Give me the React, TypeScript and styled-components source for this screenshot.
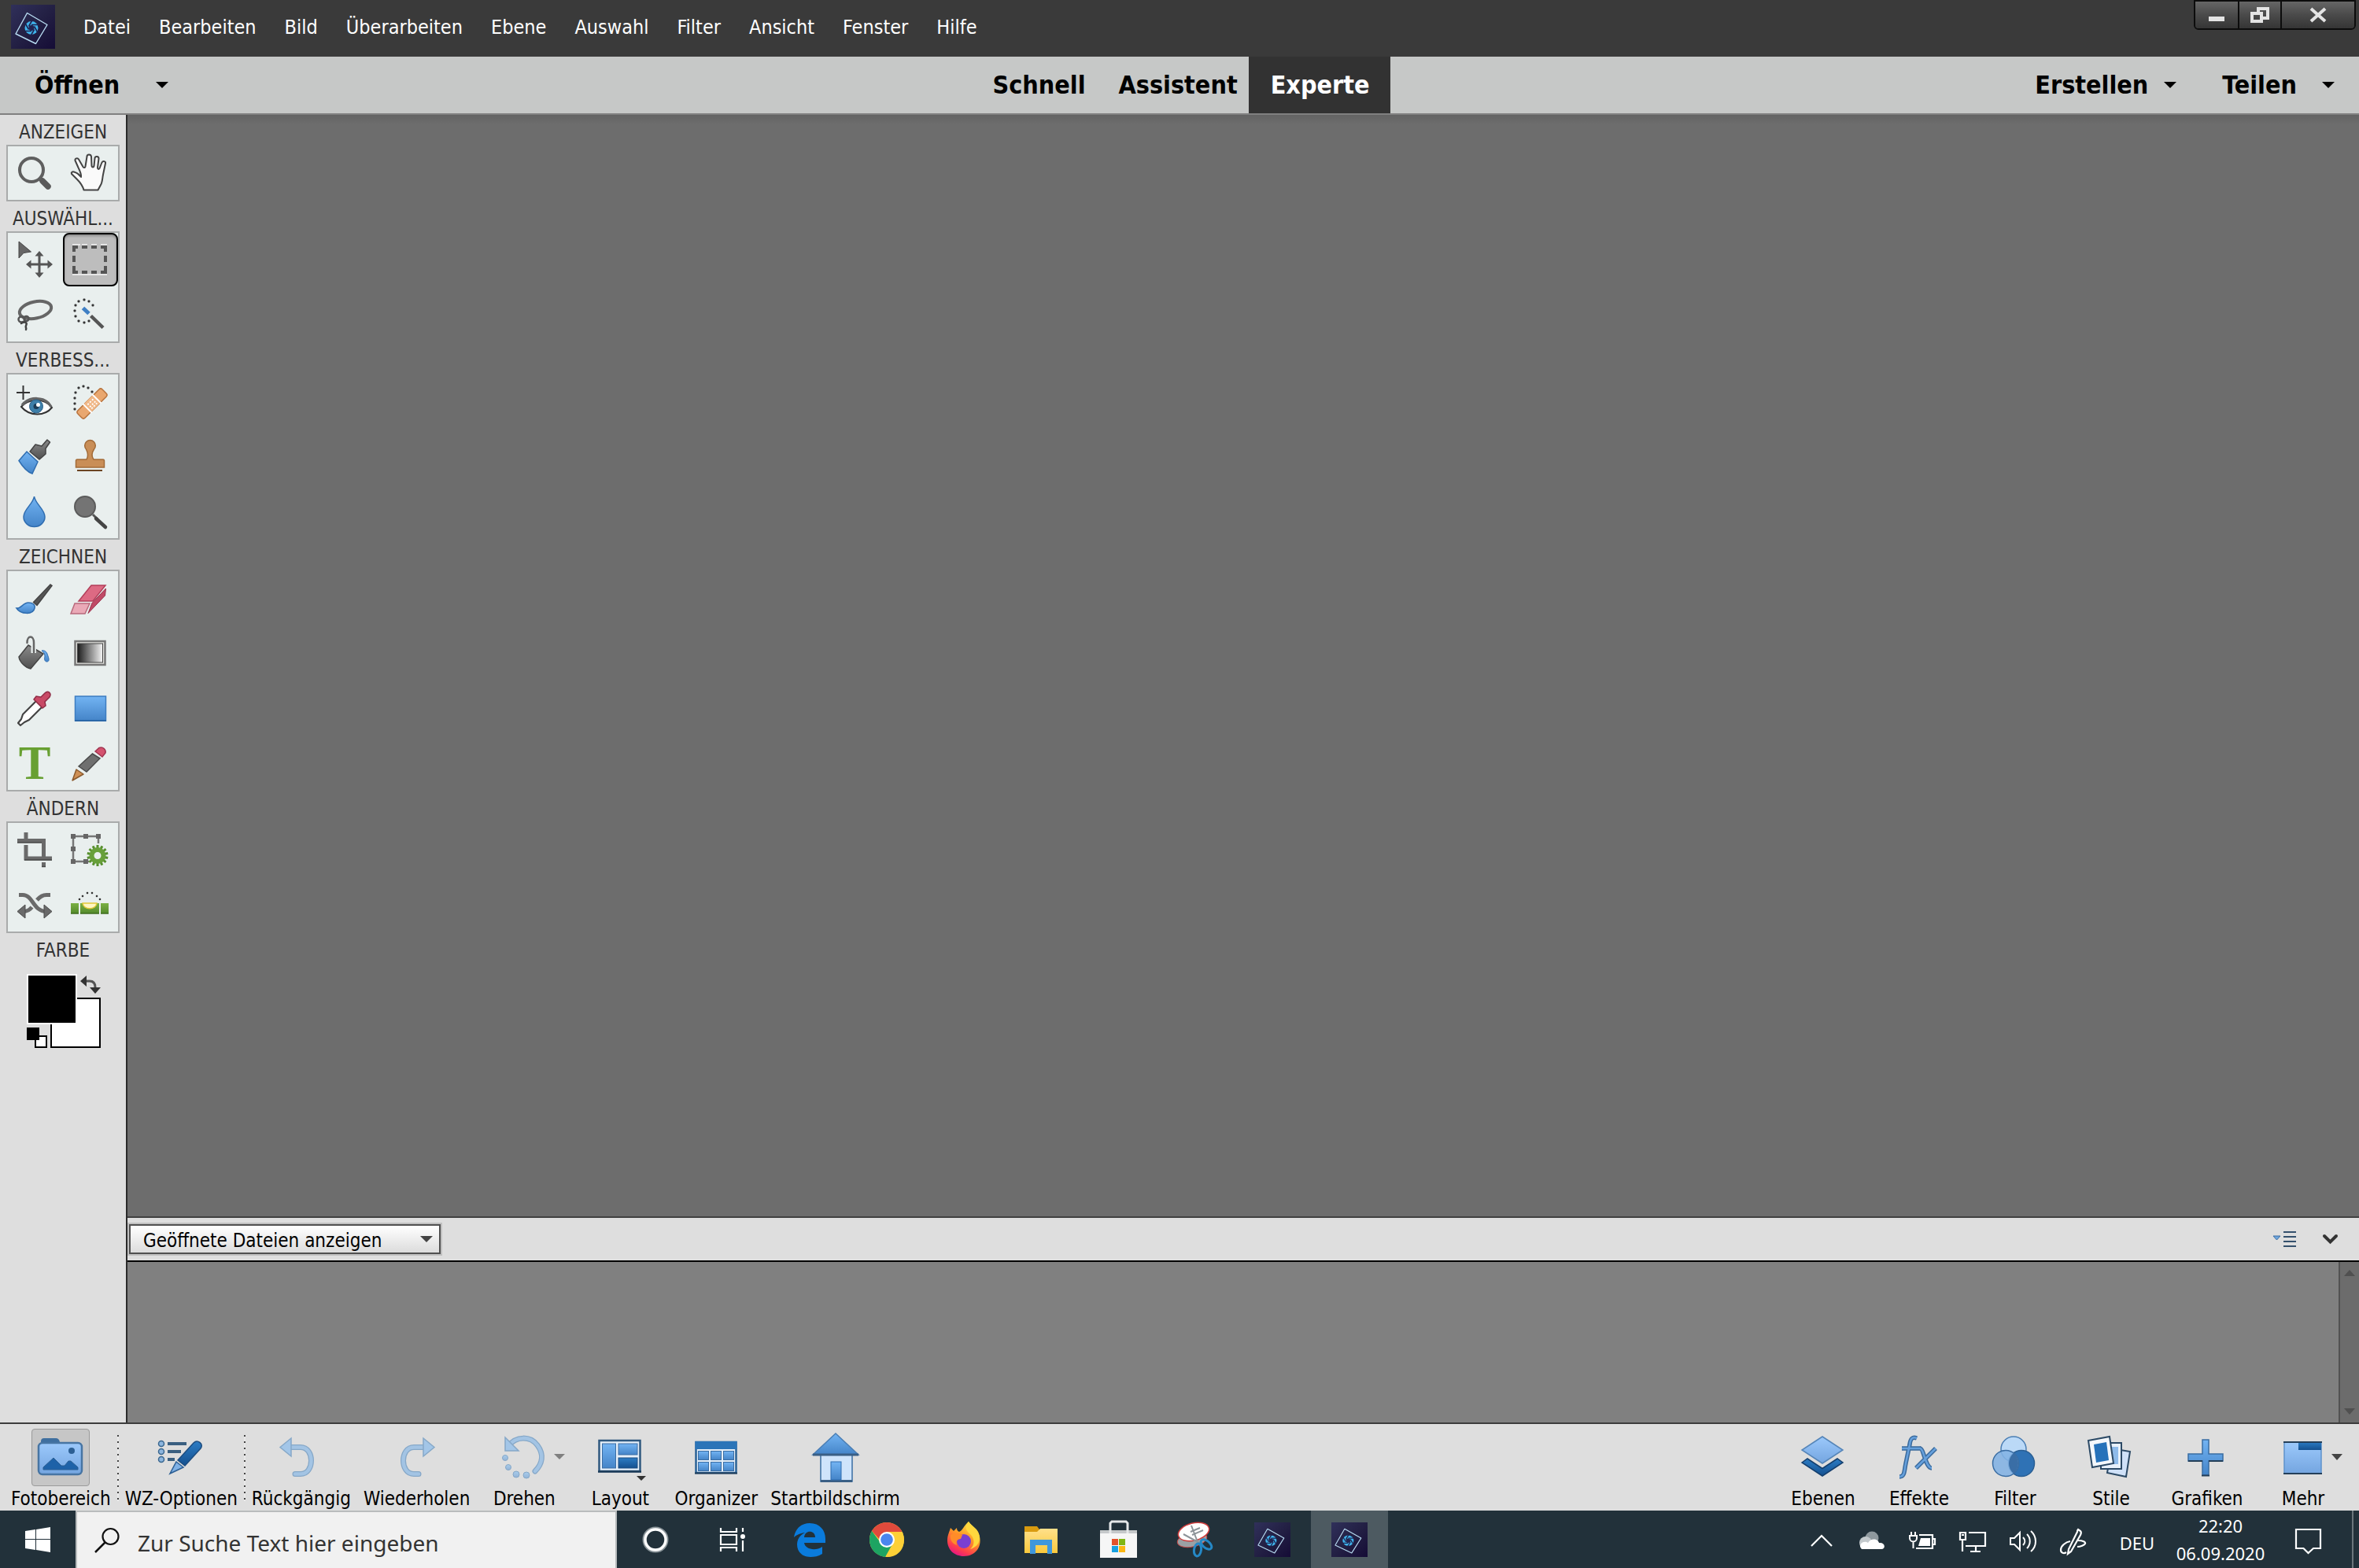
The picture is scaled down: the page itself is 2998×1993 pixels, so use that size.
import React from "react";
import styled, { createGlobalStyle, css } from "styled-components";

const UI_FONT = `"DejaVu Sans Condensed", "DejaVu Sans", "Noto Sans", sans-serif`;
const SYSTEM_FONT = `"Noto Sans", "Open Sans", sans-serif`;

const GlobalStyle = createGlobalStyle`
  *, *::before, *::after { box-sizing: border-box; }
  html, body { margin: 0; padding: 0; }
  body { background: #dedede; font-family: ${UI_FONT}; color: #000; }
  button, select, input { font: inherit; color: inherit; margin: 0; padding: 0; border: 0; background: none; border-radius: 0; }
  svg { display: block; overflow: visible; flex: none; }
`;

/* ---------- shell ---------- */

const Shell = styled.div`
  display: flex;
  flex-direction: column;
  height: 100vh;
  overflow: hidden;
`;

const TitleBar = styled.header`
  display: flex;
  align-items: flex-start;
  justify-content: space-between;
  height: 72px;
  padding: 0 4px 0 14px;
  background: #3a3a3a;
`;

const MenuGroup = styled.nav`
  display: flex;
  align-items: center;
  gap: 36px;
  height: 70px;
`;

const LogoSlot = styled.span`
  display: flex;
  padding-bottom: 2px;
`;

const MenuItem = styled.button`
  font-size: 25px;
  line-height: 32px;
  color: #fff;
`;

const WindowControls = styled.div`
  display: flex;
  border: 2px solid #0c0c0c;
  border-radius: 0 0 6px 6px;
  overflow: hidden;
`;

const WindowButton = styled.button<{ $wide?: boolean }>`
  display: flex;
  align-items: center;
  justify-content: center;
  width: ${(p) => (p.$wide ? 94 : 54)}px;
  height: 34px;
  background: linear-gradient(#666, #4a4a4a 50%, #353535);
  & + & {
    border-left: 2px solid #0c0c0c;
  }
`;

/* ---------- mode bar ---------- */

const ModeBar = styled.div`
  display: grid;
  grid-template-columns: 1fr auto 1fr;
  height: 74px;
  background: #c6c8c7;
  border-bottom: 2px solid #808080;
  font-size: 32px;
  line-height: 40px;
  font-weight: 700;
`;

const ModeSide = styled.div<{ $end?: boolean }>`
  display: flex;
  align-items: center;
  justify-content: ${(p) => (p.$end ? "flex-end" : "flex-start")};
  gap: 58px;
  padding: 0 31px 0 44px;
`;

const DropButton = styled.button<{ $gap: number }>`
  display: flex;
  align-items: center;
  gap: ${(p) => p.$gap}px;
  font-weight: 700;
`;

const Tabs = styled.div`
  display: flex;
`;

const Tab = styled.button<{ $active?: boolean }>`
  padding: 0 14px 0 30px;
  font-weight: 700;
  & + & {
    padding-left: 28px;
  }
  ${(p) =>
    p.$active &&
    css`
      && {
        padding: 0 26px 0 28px;
      }
      background: #323232;
      color: #fff;
    `}
`;

/* ---------- work area ---------- */

const WorkArea = styled.main`
  display: flex;
  flex: 1;
  min-height: 0;
`;

const Toolbox = styled.aside`
  width: 162px;
  padding: 0 8px;
  background: #dedede;
  border-right: 2px solid #2a2a2a;
`;

const ToolHeading = styled.h2`
  margin: 0;
  height: 38px;
  padding-top: 6px;
  font-size: 24px;
  line-height: 32px;
  font-weight: 400;
  text-align: center;
  color: #333;
`;

const ToolGrid = styled.div`
  display: grid;
  grid-template-columns: 1fr 1fr;
  row-gap: 2px;
  border: 2px solid #a9abab;
  background: #e9efee;
`;

const ToolButton = styled.button<{ $selected?: boolean }>`
  display: flex;
  align-items: center;
  justify-content: center;
  height: 68px;
  ${(p) =>
    p.$selected &&
    css`
      background: #bdbdbd;
      border: 2px solid #000;
      border-radius: 8px;
      box-shadow: inset 0 2px 3px #8c8c8c;
    `}
`;

const Swatches = styled.div`
  display: flex;
  padding: 14px 0 0 26px;
`;

const Documents = styled.section`
  display: flex;
  flex-direction: column;
  flex: 1;
  min-width: 0;
`;

const Canvas = styled.div`
  flex: 1;
  background: linear-gradient(#636363, #6d6d6d 12px);
`;

const BinBar = styled.div`
  display: flex;
  align-items: center;
  justify-content: space-between;
  height: 58px;
  padding: 0 27px 0 2px;
  background: #dedede;
  border-top: 2px solid #404040;
  border-bottom: 2px solid #000;
`;

const SelectWrap = styled.label`
  display: grid;
  grid-template-columns: 1fr 24px;
  align-items: center;
  width: 396px;
  height: 38px;
  border: 2px solid #505050;
  background: linear-gradient(#fff, #dcdcdc);
  box-shadow: 0 0 0 2px #c0c0c0;
`;

const BinSelect = styled.select`
  grid-area: 1 / 1 / 2 / 3;
  height: 34px;
  padding: 4px 0 0 16px;
  appearance: none;
  font-size: 24px;
  line-height: 30px;
`;

const SelectArrow = styled.svg`
  grid-area: 1 / 2 / 2 / 3;
  pointer-events: none;
`;

const BinActions = styled.div`
  display: flex;
  align-items: center;
  gap: 34px;
`;

const IconButton = styled.button`
  display: flex;
`;

const Bin = styled.div`
  display: flex;
  justify-content: flex-end;
  height: 204px;
  background: #808080;
`;

const BinScroll = styled.div`
  display: flex;
  flex-direction: column;
  align-items: center;
  justify-content: space-between;
  width: 26px;
  padding: 10px 0;
  background: #6c6c6c;
  border-left: 2px solid #525252;
`;

/* ---------- action bar ---------- */

const ActionBar = styled.footer`
  display: flex;
  justify-content: space-between;
  height: 112px;
  padding: 0 10px 0 6px;
  background: #dedede;
  border-top: 2px solid #3c3c3c;
`;

const ActionGroup = styled.div`
  display: flex;
`;

const Action = styled.button`
  display: flex;
  flex-direction: column;
  align-items: center;
  gap: 1px;
  min-width: 122px;
  padding: 6px 8px 0;
  font-size: 24px;
  line-height: 30px;
`;

const ActionIcon = styled.span<{ $on?: boolean }>`
  display: flex;
  align-items: center;
  justify-content: center;
  width: 74px;
  height: 74px;
  border: 1px solid ${(p) => (p.$on ? "#9a9a9a" : "transparent")};
  border-radius: 4px;
  background: ${(p) => (p.$on ? "#c6c6c6" : "transparent")};
`;

const DottedRule = styled.span`
  width: 2px;
  margin: 14px 0 12px;
  background: repeating-linear-gradient(#444 0 2px, #e8e8e8 2px 8px);
`;

/* ---------- taskbar ---------- */

const Taskbar = styled.footer`
  display: flex;
  justify-content: space-between;
  height: 73px;
  background: #22313a;
  color: #fff;
  font-family: ${SYSTEM_FONT};
`;

const TaskGroup = styled.div`
  display: flex;
`;

const StartButton = styled.button`
  display: flex;
  align-items: center;
  justify-content: center;
  width: 96px;
`;

const SearchBox = styled.label`
  display: flex;
  align-items: center;
  gap: 23px;
  width: 688px;
  padding-left: 22px;
  background: #f1f1f1;
  border: 2px solid #b9bcbd;
  border-bottom: 0;
`;

const SearchInput = styled.input`
  flex: 1;
  min-width: 0;
  height: 60px;
  padding-top: 6px;
  font-size: 28px;
  line-height: 40px;
  outline: none;
  &::placeholder {
    color: #333;
    opacity: 1;
  }
`;

const TaskButton = styled.button<{ $active?: boolean }>`
  display: flex;
  align-items: center;
  justify-content: center;
  width: 98px;
  background: ${(p) => (p.$active ? "#4d5a61" : "transparent")};
`;

const Tray = styled.div`
  display: flex;
  font-size: 22px;
`;

const TrayButton = styled.button`
  display: flex;
  align-items: center;
  justify-content: center;
  width: 64px;
  padding-top: 4px;
`;

const Language = styled.button`
  width: 98px;
  padding-top: 8px;
  line-height: 30px;
`;

const Clock = styled.time`
  width: 114px;
  padding-top: 2px;
  line-height: 35px;
  text-align: center;
  white-space: pre;
`;

const Notifications = styled.button`
  display: flex;
  align-items: center;
  justify-content: center;
  width: 110px;
  padding-top: 4px;
`;

const ShowDesktop = styled.button`
  width: 9px;
  border-left: 2px solid #6b767c;
`;

/* ---------- icons ---------- */

const Icon = ({ size = 48, children }: { size?: number; children: React.ReactNode }) => (
  <svg width={size} height={size} viewBox={`0 0 ${size} ${size}`} fill="none" aria-hidden="true">
    {children}
  </svg>
);

const Triangle = ({ width = 16, height = 8, color = "#000", up = false }) => (
  <svg width={width} height={height} viewBox="0 0 16 8" preserveAspectRatio="none" aria-hidden="true">
    <path d={up ? "M0 8h16L8 0z" : "M0 0h16L8 8z"} fill={color} />
  </svg>
);

const Gradients = () => (
  <svg width="0" height="0" style={{ position: "absolute" }} aria-hidden="true">
    <defs>
      <linearGradient id="grey" x1="0" y1="0" x2="0" y2="1"><stop offset="0" stopColor="#8b8b8b" /><stop offset="1" stopColor="#4f4f4f" /></linearGradient>
      <linearGradient id="blue" x1="0" y1="0" x2="0" y2="1"><stop offset="0" stopColor="#73b4f3" /><stop offset="1" stopColor="#4484c8" /></linearGradient>
      <linearGradient id="deep" x1="0" y1="0" x2="0" y2="1"><stop offset="0" stopColor="#2c7cc4" /><stop offset="1" stopColor="#14508f" /></linearGradient>
      <linearGradient id="sky" x1="0" y1="0" x2="0" y2="1"><stop offset="0" stopColor="#9cc9fb" /><stop offset="1" stopColor="#74a5e0" /></linearGradient>
      <linearGradient id="pale" x1="0" y1="0" x2="0" y2="1"><stop offset="0" stopColor="#a9cdec" /><stop offset="1" stopColor="#93b3d6" /></linearGradient>
      <linearGradient id="green" x1="0" y1="0" x2="0" y2="1"><stop offset="0" stopColor="#7bb043" /><stop offset="1" stopColor="#548a2c" /></linearGradient>
      <linearGradient id="ramp"><stop offset="0" stopColor="#1c1c1c" /><stop offset="1" stopColor="#f4f4f4" /></linearGradient>
      <linearGradient id="navy" x1="0" y1="0" x2="1" y2="1"><stop offset="0" stopColor="#30305a" /><stop offset=".5" stopColor="#232044" /><stop offset="1" stopColor="#150c36" /></linearGradient>
      <linearGradient id="fox" x1=".8" y1="0" x2=".3" y2="1"><stop offset="0" stopColor="#fff04a" /><stop offset=".45" stopColor="#ff9a26" /><stop offset=".8" stopColor="#ff3d4d" /><stop offset="1" stopColor="#e31587" /></linearGradient>
      <linearGradient id="folder" x1="0" y1="0" x2="0" y2="1"><stop offset="0" stopColor="#ffe08a" /><stop offset="1" stopColor="#fbc93d" /></linearGradient>
    </defs>
  </svg>
);

const ElementsLogo = ({ width, height }: { width: number; height: number }) => (
  <svg width={width} height={height} viewBox="0 0 56 56" preserveAspectRatio="none" fill="none" aria-hidden="true">
    <rect width="56" height="56" fill="url(#navy)" />
    <path d="M20.500 10.500 46 25.500 31.500 49.500 6 37z" stroke="#b8dcf2" strokeWidth="1.400" strokeLinejoin="round" />
    <circle cx="26" cy="29.500" r="8.500" fill="#3fb4ec" />
    <g stroke="#1f2350" strokeWidth="1.600">
      <path d="M26 25.500h9M29.500 27.500l4.500 8M29.500 31.500l-4.500 8M26 33.500h-9M22.500 31.500l-4.500-8M22.500 27.500l4.500-8" />
    </g>
    <circle cx="26" cy="29.500" r="3.500" fill="#232350" />
  </svg>
);

const dots = (points: number[][], size = 3) =>
  points.map(([x, y]) => <rect key={`${x}-${y}`} x={x - size / 2} y={y - size / 2} width={size} height={size} rx="1" fill="#333" />);

const gearTeeth = Array.from({ length: 14 }, (_, i) => (i * 360) / 14);

const toolIcons: Record<string, React.ReactNode> = {
  zoom: (
    <>
      <path d="M29 30l4 4" stroke="#5a5a5a" strokeWidth="5" />
      <path d="M33 34l7 7" stroke="#5a5a5a" strokeWidth="7.500" strokeLinecap="round" />
      <circle cx="19" cy="20" r="15" stroke="#5f5f5f" strokeWidth="4" />
    </>
  ),
  hand: (
    <path
      d="M15.500 45.500C14 40 10 35 7 32L0 25c-1-2 1-3 3-2.500 4 1 7 4 9 6.500.500-3-2-9-3.500-12L4.500 8c-.500-2.500 3-4 4.500-1.500l5.500 9.500c1 1.500 3 1.500 3-.500L19.500 3c0-3.500 5-3.500 5.500 0l.500 12c.500 2 2.500 2 3 0l1-10c.500-3 5-2.500 5 .500L33 17c0 2 1.500 2.500 2.500 1l3-7.500c1.500-2.500 5-1.500 4.500 1L40 26c-1 5-1 10-3 13l-3.500 6.500z"
      fill="#fafafa" stroke="#444" strokeWidth="2" strokeLinejoin="round"
    />
  ),
  move: (
    <>
      <path d="M3 1v21l6-6.500L18.500 14z" fill="#666" stroke="#444" />
      <path d="M29 18v24M17 30h24" stroke="#555" strokeWidth="3" />
      <path d="M29 13l5.500 6.500h-11zM29 47l5.500-6.500h-11zM12 30l6.500-5.500v11zM46 30l-6.500-5.500v11z" fill="#555" />
    </>
  ),
  marquee: (
    <>
      <path d="M1 43h44M1 5h10M13 5h7M25 5h7M37 5h8" stroke="#e6e6e6" strokeWidth="2" />
      <path d="M3 14V8h5M13 8h7M25 8h7M37 8h6v6M43 19v8M43 32v8h-6M32 40h-7M20 40h-7M8 40H3v-8M3 27v-8" stroke="#555" strokeWidth="4" />
    </>
  ),
  lasso: (
    <>
      <ellipse cx="24" cy="18" rx="20.500" ry="10.500" transform="rotate(-12 24 18)" stroke="#666" strokeWidth="4" />
      <ellipse cx="6.500" cy="30" rx="4" ry="3.500" stroke="#555" strokeWidth="2.500" />
      <ellipse cx="12.500" cy="29" rx="3" ry="3" stroke="#555" strokeWidth="2.500" />
      <path d="M6 35c5-3 8-1 6 3-1 2 1 3 0 5" stroke="#444" strokeWidth="2.500" strokeLinecap="round" />
    </>
  ),
  wand: (
    <>
      {dots([[16, 5], [22, 7], [27, 12], [9, 7], [5, 12], [4, 19], [5, 26], [9, 32], [16, 34], [22, 32]])}
      <path d="M14.500 15.500l7.500 7" stroke="#3f7fc4" strokeWidth="5" />
      <path d="M24.500 25.500l15.500 15" stroke="#555" strokeWidth="4.500" />
    </>
  ),
  eye: (
    <>
      <path d="M8.500 4v18M0 13h17" stroke="#333" strokeWidth="2" />
      <path d="M6 31c8-9 28-13 39 1-9 11-28 12-39-1z" fill="#fff" stroke="#333" strokeWidth="2" />
      <path d="M7 29c9-11 29-12 37 2" stroke="#666" strokeWidth="3.500" />
      <circle cx="25" cy="30.500" r="8.500" fill="#3d7fa9" stroke="#2a5f86" />
      <circle cx="25" cy="30.500" r="3.500" fill="#1c3b55" />
      <circle cx="27.500" cy="28.500" r="2.500" fill="#fff" />
    </>
  ),
  heal: (
    <>
      {dots([[4, 34], [4, 27], [4, 20], [5, 13], [9, 7], [15, 5], [21, 7], [26, 12]])}
      <g transform="rotate(-45 26 27)">
        <rect x="4" y="20.500" width="44" height="13" rx="3" fill="#e9a76f" stroke="#b9733c" strokeWidth="1.500" />
        <rect x="18" y="20" width="16" height="14" fill="#f0b888" />
        <path d="M17.500 19v16M34.500 19v16" stroke="#fff" strokeWidth="2" />
        <path d="M21 24h2m2 0h2m2 0h2M21 28h2m2 0h2m2 0h2M21 31h2m2 0h2m2 0h2" stroke="#fff" strokeWidth="1.800" />
      </g>
    </>
  ),
  smart: (
    <>
      <path d="M3 29.500L13 18l14 13-7 15C14 44 7 36 3 29.500z" fill="url(#blue)" stroke="#2f6db0" strokeWidth="1.500" />
      <path d="M17 18l7-9 8 2 7-8 3.500 3L37 14v7l-8 7z" fill="url(#grey)" stroke="#444" strokeWidth="1.500" strokeLinejoin="round" />
    </>
  ),
  stamp: (
    <>
      <path d="M19 28c3-5 1-10-.500-13a6.800 6.800 0 1 1 10 0c-2 3-4 8-.500 13h12q1.500 0 1.500 2v8h-36v-8q0-2 1.500-2z" fill="#c98e57" stroke="#a26b38" strokeWidth="1.500" />
      <path d="M7 42h32" stroke="#6b4422" strokeWidth="2" />
    </>
  ),
  blur: <path d="M22.500 5C24 15 36 21 36 31a13.500 12.500 0 0 1-27 0C9 21 21 15 22.500 5z" fill="url(#blue)" stroke="#2f6db0" strokeWidth="1.500" />,
  sponge: (
    <>
      <path d="M27 28l6 6" stroke="#555" strokeWidth="3" />
      <path d="M31 33l12 11" stroke="#444" strokeWidth="4.500" strokeLinecap="round" />
      <circle cx="17" cy="18" r="13" fill="#747474" stroke="#5c5c5c" strokeWidth="2" />
    </>
  ),
  brush: (
    <>
      <path d="M0 37c6 1 8-7 15-7 6 0 9 3 8 7-2 9-18 8-23 0z" fill="url(#blue)" stroke="#2f6db0" strokeWidth="1.500" />
      <path d="M21.500 29.500L43 7l2 1.500L26 33.500z" fill="#555" stroke="#444" strokeWidth="1.500" />
    </>
  ),
  eraser: (
    <>
      <path d="M25 8h18L27 28H9z" fill="#dd6a83" stroke="#b23f5a" strokeWidth="1.500" />
      <path d="M4 31h19l-6 13H-1z" fill="#eaa9b7" stroke="#b86a7c" strokeWidth="1.500" />
      <path d="M43.500 12l-1 9L21 43.500l5-13z" fill="#c04a66" stroke="#9b2f4a" />
    </>
  ),
  bucket: (
    <>
      <path d="M3 29L15 14l19 11-16 19C12 43 4 36 3 29z" fill="url(#grey)" stroke="#444" strokeWidth="1.500" />
      <path d="M21.700 10v14" stroke="#e9efee" strokeWidth="6.500" />
      <path d="M13.500 11c0-10 8.500-10 8.500 0v12" stroke="#666" strokeWidth="2.500" strokeLinecap="round" />
      <path d="M32 21c5-1 7 3 8 7 2 5 1 7-1.500 7S35 32 36 29c0-4-1-6-4-8z" fill="url(#blue)" stroke="#2f6db0" />
    </>
  ),
  gradient: (
    <>
      <rect x="4.500" y="9" width="38" height="30" fill="#e4e4e0" stroke="#777" strokeWidth="2.500" />
      <rect x="7.500" y="12" width="32" height="24" fill="url(#ramp)" stroke="#444" />
    </>
  ),
  dropper: (
    <>
      <path d="M27 13L8 32l-2 6-4 5 3 3 5-4 6-3 18-18" fill="#fff" stroke="#444" strokeWidth="2.200" strokeLinejoin="round" />
      <path d="M22 13l3-4 6 1 5-5c4-4 9 0 6 5l-6 6 1 5-4 3z" fill="#c84a66" stroke="#8f2c45" strokeWidth="1.500" />
    </>
  ),
  shape: (
    <>
      <rect x="4.500" y="9" width="39" height="31" fill="url(#blue)" stroke="#3d7cc0" strokeWidth="1.500" />
      <path d="M4 40h40" stroke="#2b67a8" strokeWidth="2" />
    </>
  ),
  type: <text x="23" y="44" textAnchor="middle" fontFamily='"Liberation Serif", serif' fontWeight="700" fontSize="61" fill="#68a032">T</text>,
  pencil: (
    <>
      <path d="M1 46l5-14 9 6z" fill="#cf9055" stroke="#8a5a2e" strokeWidth="1.500" strokeLinejoin="round" />
      <path d="M9 28l17.500-16 9.500 6-17 17z" fill="#6f6f6f" stroke="#4a4a4a" strokeWidth="1.500" />
      <path d="M30 9l5-4.500c5-2 9 2.500 8 6.500l-4 5z" fill="#d4536f" stroke="#a03550" strokeWidth="1.500" />
    </>
  ),
  crop: (
    <>
      <path d="M1 12.500h33.500V33M12 2v9M12 18v17h33M34.500 40v6" stroke="#6a6a6a" strokeWidth="5" />
      <path d="M1 15h31M10 37h35M32 45.500h5" stroke="#484848" strokeWidth="1.500" />
    </>
  ),
  recompose: (
    <>
      <path d="M34 16V7H2v32h20" stroke="#777" strokeWidth="2.500" />
      <path d="M-1 4h6v6h-6zM15 4h6v6h-6zM31 4h6v6h-6zM-1 20h6v6h-6zM-1 36h6v6h-6zM15 36h6v6h-6z" fill="#666" />
      <g fill="#578f2e">
        {gearTeeth.map((angle) => <rect key={angle} x="31.500" y="18" width="3" height="8" transform={`rotate(${angle} 33 31.500)`} />)}
      </g>
      <circle cx="33" cy="31.500" r="7.500" fill="#e9efee" stroke="#68a03a" strokeWidth="6" />
    </>
  ),
  shuffle: (
    <>
      <path d="M3 11.500h5c13 0 13 21 30 21M43 11.500h-5c-6 0-9 3-12 6.500M19.500 27c-3 4-6 5.500-11 5.500" stroke="#6a6a6a" strokeWidth="5" />
      <path d="M45 32.500L35 24v17zM1 32.500L11 24v17z" fill="#6a6a6a" stroke="#4c4c4c" />
    </>
  ),
  straighten: (
    <>
      {dots([[10, 17], [14, 13], [20, 9], [26, 9], [32, 13], [36, 17]], 2.5)}
      <path d="M-1 22H9v13H-1zM11 22h24v13H11zM37 22h10v13H37z" fill="url(#green)" />
      <path d="M14 22h18c-1 9-17 9-18 0z" fill="#fff6c4" stroke="#e3c93a" strokeWidth="1.500" />
      <path d="M-1 35H9M11 35h24M37 35h10" stroke="#3f6d1e" strokeWidth="1.500" />
    </>
  ),
};

const actionIcons: Record<string, React.ReactNode> = {
  bin: (
    <>
      <path d="M5 12V9q0-4 4-4h15q4 0 5 5H5z" fill="#3f6f9f" />
      <rect x="2" y="11" width="55" height="40" rx="5" fill="url(#sky)" stroke="#4775a3" strokeWidth="2.500" />
      <circle cx="44" cy="21" r="4" fill="#2c5f94" />
      <path d="M8 45v-3l13-12 10 10h4l5-6h3l9 8v3z" fill="#1e62a8" stroke="#2c5f94" />
    </>
  ),
  options: (
    <>
      <g fill="#8db6df" stroke="#3a678f" strokeWidth="1.500"><circle cx="5" cy="12" r="3.500" /><circle cx="5" cy="22" r="3.500" /><circle cx="5" cy="32" r="3.500" /></g>
      <path d="M13 12h24M13 22h17M13 32h9" stroke="#3a5f80" strokeWidth="4" />
      <path d="M26 33L46 11c5-5 13 1 9 7L35 40z" fill="url(#deep)" stroke="#1d4d80" strokeWidth="1.500" />
      <path d="M24 35l9 7-17 8z" fill="#7fb1e6" stroke="#2c5f94" strokeWidth="1.500" />
    </>
  ),
  undo: (
    <>
      <path d="M12 16.500h17c18 0 18 34 0 34h-7" stroke="#86a8c8" strokeWidth="7" strokeLinecap="round" />
      <path d="M12 16.500h17c18 0 18 34 0 34h-7" stroke="#a3c4e4" strokeWidth="4.500" strokeLinecap="round" />
      <path d="M3 16.500L17 5v23z" fill="#a3c6e8" stroke="#86a8c8" strokeWidth="1.500" />
    </>
  ),
  redo: (
    <>
      <path d="M43 16.500H26c-18 0-18 34 0 34h6" stroke="#86a8c8" strokeWidth="7" strokeLinecap="round" />
      <path d="M43 16.500H26c-18 0-18 34 0 34h6" stroke="#a3c4e4" strokeWidth="4.500" strokeLinecap="round" />
      <path d="M52 16.500L38 5v23z" fill="#a3c6e8" stroke="#86a8c8" strokeWidth="1.500" />
    </>
  ),
  rotate: (
    <>
      <path d="M10 15C20 2 38 2 47 14c9 12 6 24-3 33" stroke="#86a8c8" strokeWidth="7" strokeLinecap="round" />
      <path d="M10 15C20 2 38 2 47 14c9 12 6 24-3 33" stroke="#a3c4e4" strokeWidth="4.500" strokeLinecap="round" />
      <path d="M6 4v17h17z" fill="#a3c6e8" stroke="#86a8c8" strokeWidth="1.500" />
      <g fill="url(#pale)" stroke="#86a8c8"><circle cx="6" cy="30" r="3.500" /><circle cx="10" cy="42" r="3.500" /><circle cx="20" cy="51" r="4" /><circle cx="33" cy="52" r="4" /></g>
      <path d="M68 25h14l-7 7z" fill="#808080" />
    </>
  ),
  layout: (
    <>
      <rect x="3.500" y="8" width="52" height="39" fill="#e6f0fa" stroke="#2f587f" strokeWidth="2.500" />
      <path d="M2 47.500h55" stroke="#1c3b58" strokeWidth="2.500" />
      <rect x="7.500" y="12" width="17" height="31" fill="url(#blue)" stroke="#3a6da3" />
      <rect x="28" y="12" width="24" height="14" fill="url(#blue)" stroke="#3a6da3" />
      <rect x="28" y="30" width="24" height="13" fill="url(#deep)" stroke="#1d4d80" />
      <path d="M51 53h12l-6 6z" fill="#333" />
    </>
  ),
  organizer: (
    <>
      <rect x="4.500" y="10" width="51" height="39" fill="#e6f0fa" stroke="#2a6296" strokeWidth="2.500" />
      <path d="M3.500 9h53v10h-53z" fill="#2a74b8" />
      <path d="M3 49.500h54" stroke="#1c3b58" strokeWidth="2" />
      {[0, 1, 2].map((col) => [0, 1].map((row) => <rect key={`${col}${row}`} x={7.5 + col * 16} y={21.5 + row * 14} width="13" height="11" fill="url(#blue)" stroke="#3a6da3" />))}
    </>
  ),
  home: (
    <>
      <path d="M11 25h40v35H11z" fill="#cfe4fb" stroke="#3a6da3" strokeWidth="1.500" />
      <path d="M30 -1l29 27H1z" fill="url(#blue)" stroke="#4a7eb4" strokeWidth="1.500" />
      <path d="M1 26h58M11 59.500h40" stroke="#3a5f85" strokeWidth="3" />
      <rect x="24" y="35" width="13" height="23" fill="url(#blue)" stroke="#2f6db0" />
    </>
  ),
  layers: (
    <>
      <path d="M29 3l26 17-26 17L3 20z" fill="url(#sky)" stroke="#5585b8" strokeWidth="1.500" />
      <path d="M3 36l7-5 19 12.500L48 31l7 5-26 17z" fill="url(#deep)" stroke="#143f6e" strokeWidth="1.500" />
    </>
  ),
  effects: (
    <>
      <path d="M5 54c7 0 6-8 8-17l5-24c1-8 4-10 9-8M8 18h24" stroke="#3a6a9c" strokeWidth="5.500" />
      <path d="M5 54c7 0 6-8 8-17l5-24c1-8 4-10 9-8M8 18h24" stroke="#66a0dc" strokeWidth="2.500" />
      <path d="M31 18c5 0 7 25 15 25M51 18L26 43" stroke="#3a6a9c" strokeWidth="5.500" />
      <path d="M31 18c5 0 7 25 15 25M51 18L26 43" stroke="#66a0dc" strokeWidth="2.500" />
    </>
  ),
  filter: (
    <>
      <circle cx="28" cy="19" r="16" fill="#bbd9f7" stroke="#4a7eb4" strokeWidth="1.500" />
      <circle cx="38" cy="37" r="16.500" fill="#2f72b5" stroke="#2a5f94" strokeWidth="1.500" />
      <circle cx="18" cy="37" r="16.500" fill="#82b2e4" fillOpacity=".88" stroke="#3a6da3" strokeWidth="1.500" />
      <path d="M28 24c8 7 8 19 0 26-8-7-8-19 0-26z" fill="#3a6ea6" />
    </>
  ),
  styles: (
    <>
      <path d="M30 18l24 4-5 32-24-5z" fill="#cfe1f8" stroke="#2c4a66" strokeWidth="2" />
      <path d="M17 11h26v33H17z" fill="#e8f1fb" stroke="#2c4a66" strokeWidth="2" />
      <path d="M22 16h17v22H22z" fill="#8ebbea" />
      <path d="M1 8l27-5 5 34-27 5z" fill="#f4f8fc" stroke="#2c4a66" strokeWidth="2" />
      <path d="M8 13l16-3 3 23-16 3z" fill="#2672ba" />
    </>
  ),
  graphics: (
    <>
      <path d="M24 7h8v18h18v9H32v18h-8V34H6v-9h18z" fill="url(#blue)" stroke="#3a6da3" strokeWidth="1.500" />
      <path d="M6 34h18M32 34h18M23 52.500h10" stroke="#243f59" strokeWidth="2" />
    </>
  ),
  more: (
    <>
      <path d="M6 10h47v40H6z" fill="url(#sky)" stroke="#5f93cc" strokeWidth="1.500" />
      <path d="M24 10h29v10H24z" fill="url(#deep)" />
      <path d="M5 10h49M5 50h49" stroke="#243f59" strokeWidth="2" />
      <path d="M66 25h14l-7 8z" fill="#444" />
    </>
  ),
};

const taskIcons: Record<string, React.ReactNode> = {
  cortana: (
    <>
      <circle cx="24" cy="24" r="14.500" stroke="#8b959a" strokeWidth="4" />
      <circle cx="24" cy="24" r="13" stroke="#fff" strokeWidth="3.500" />
    </>
  ),
  taskview: (
    <>
      <path d="M9 9v5h20V9M9 39v-5h20v5M9 18h20v12H9zM37 9v5M37 25v14" stroke="#fff" strokeWidth="2.200" />
      <circle cx="37" cy="20" r="3" fill="#fff" />
    </>
  ),
  edge: (
    <path
      d="M4 21C6 9 14 3 24 3c13 0 20 9 20 20v5H17c1 8 14 11 23 5v9c-5 3-10 4-15 4-11 0-17-7-17-16 0-7 4-12 10-15-8 1-12 4-14 6zm13 0h14c0-9-13-10-14 0z"
      fill="#0a7bdc"
    />
  ),
  chrome: (
    <>
      <circle cx="24" cy="24" r="22" fill="#fdd037" />
      <path d="M5 13a22 22 0 0 1 38 0v2H24l-9 9z" fill="#e04a3c" />
      <path d="M5 13a22 22 0 0 0 17 33l9-16-14-1z" fill="#1da462" />
      <path d="M43.500 14H24v3l8 12-9 17c20 1 27-18 20.500-32z" fill="#fdd037" />
      <circle cx="24" cy="24" r="10" fill="#fff" />
      <circle cx="24" cy="24" r="7.800" fill="#4a86ee" />
    </>
  ),
  firefox: (
    <>
      <path d="M30 1c3 5 11 8 14 19 3 14-6 25-20 25C11 45 3 36 3 25c0-7 3-12 4-16l4 4 4-4c0 3 1 4 3 5 4-1 6-8 12-13z" fill="url(#fox)" />
      <path d="M30 1c-6 7-3 12 2 16 6 6 6 14 0 19 14-4 15-18 7-26-3-3-7-5-9-9z" fill="#ffd83e" />
      <circle cx="24" cy="26" r="9" fill="#7a3fd0" />
      <path d="M7 18c4-3 10-3 15 0l-2 5c-5 0-6 4-5 8-6-2-9-7-8-13z" fill="#ff8c29" />
    </>
  ),
  folder: (
    <>
      <path d="M3 7h16l3 4v6H3z" fill="#d99b10" />
      <path d="M3 14h16l4-4h22v31H3z" fill="url(#folder)" />
      <path d="M10 24h28v18h-6V31H17v11h-7z" fill="#3f97dc" />
    </>
  ),
  store: (
    <>
      <path d="M1 12h47v6H1z" fill="#c5c8ca" />
      <path d="M14 17V3l2-2h18l2 2v14" stroke="#e6e8e9" strokeWidth="3" />
      <path d="M1 16h47v31H1z" fill="#f6f6f6" />
      <path d="M16 23h8v8h-8z" fill="#e2522b" /><path d="M25 23h8v8h-8z" fill="#7fb614" />
      <path d="M16 32h8v8h-8z" fill="#18a0e0" /><path d="M25 32h8v8h-8z" fill="#fbb714" />
    </>
  ),
  snip: (
    <>
      <ellipse cx="20" cy="24" rx="19" ry="9" transform="rotate(-12 20 24)" fill="#9aa1a5" stroke="#c34a4a" />
      <ellipse cx="22" cy="14" rx="20" ry="11" transform="rotate(-14 22 14)" fill="#fff" stroke="#cf3d3d" strokeWidth="1.500" />
      <path d="M19 6l8 21M9 17l22 12M18 14l12-5M20 18l14-6" stroke="#8d9499" strokeWidth="2" />
      <ellipse cx="27" cy="37" rx="4.500" ry="8" transform="rotate(8 27 37)" stroke="#2588c6" strokeWidth="3" />
      <ellipse cx="38" cy="30" rx="4.500" ry="8" transform="rotate(-50 38 30)" stroke="#2588c6" strokeWidth="3" />
    </>
  ),
};

const trayIcons: Record<string, React.ReactNode> = {
  expand: <path d="M5 24l13-13 13 13" stroke="#fff" strokeWidth="2.200" />,
  cloud: (
    <>
      <circle cx="18" cy="14" r="8.500" fill="#8f999e" />
      <circle cx="10" cy="20" r="8" fill="#c3c9cc" />
      <path d="M5 28c-6-6 3-12 8-8 4-7 13-5 14 0 8-1 9 8 3 8z" fill="#fff" />
    </>
  ),
  battery: (
    <>
      <path d="M14 10h17v17H10M31 15h3v7h-3" stroke="#fff" strokeWidth="2.200" />
      <path d="M16 14h12v10H13z" fill="#fff" />
      <path d="M4 6v5M9 6v5M2 11h9v3c0 6-9 6-9 0zM6.500 18v9" stroke="#fff" strokeWidth="2" />
    </>
  ),
  network: (
    <>
      <path d="M13 7h21v17H9M22 24v7M15 31h13M5 17v14M2 7h7v9H2z" stroke="#fff" strokeWidth="2.200" />
      <path d="M4 10h3" stroke="#fff" strokeWidth="2" />
    </>
  ),
  volume: <path d="M2 14h5l7-7v22l-7-7H2zM18 13c3 3 3 7 0 10M23 9c5 5 5 13 0 18M28 5c8 7 8 19 0 26" stroke="#fff" strokeWidth="2" />,
  pen: <path d="M24 3l3 2c1 1 1 3 0 5L15 31l-4 3 1-6L23 6c0-2 0-2 1-3zM14 18c-6 1-12 6-12 11 0 4 4 5 7 3M24 17c6 0 10 2 9 4s-6 4-10 4" stroke="#fff" strokeWidth="2.200" />,
};

/* ---------- content ---------- */

const menus = ["Datei", "Bearbeiten", "Bild", "Überarbeiten", "Ebene", "Auswahl", "Filter", "Ansicht", "Fenster", "Hilfe"];

const toolGroups: { title: string; tools: [string, string][] }[] = [
  { title: "ANZEIGEN", tools: [["zoom", "Zoom"], ["hand", "Hand"]] },
  { title: "AUSWÄHL...", tools: [["move", "Verschieben"], ["marquee", "Auswahlrechteck"], ["lasso", "Lasso"], ["wand", "Schnellauswahl"]] },
  { title: "VERBESS...", tools: [["eye", "Rote Augen"], ["heal", "Reparatur"], ["smart", "Smartpinsel"], ["stamp", "Kopierstempel"], ["blur", "Weichzeichner"], ["sponge", "Schwamm"]] },
  { title: "ZEICHNEN", tools: [["brush", "Pinsel"], ["eraser", "Radiergummi"], ["bucket", "Füllwerkzeug"], ["gradient", "Verlauf"], ["dropper", "Pipette"], ["shape", "Form"], ["type", "Text"], ["pencil", "Buntstift"]] },
  { title: "ÄNDERN", tools: [["crop", "Freistellen"], ["recompose", "Neu zusammensetzen"], ["shuffle", "Inhaltssensitives Verschieben"], ["straighten", "Gerade ausrichten"]] },
];

const editActions = [["undo", "Rückgängig"], ["redo", "Wiederholen"], ["rotate", "Drehen"], ["layout", "Layout"], ["organizer", "Organizer"], ["home", "Startbildschirm"]];
const panelActions = [["layers", "Ebenen"], ["effects", "Effekte"], ["filter", "Filter"], ["styles", "Stile"], ["graphics", "Grafiken"], ["more", "Mehr"]];
const pinned = ["cortana", "taskview", "edge", "chrome", "firefox", "folder", "store", "snip"];

const ActionItem = ({ icon, label, on }: { icon: string; label: string; on?: boolean }) => (
  <Action>
    <ActionIcon $on={on}><Icon size={60}>{actionIcons[icon]}</Icon></ActionIcon>
    {label}
  </Action>
);

export default function App() {
  return (
    <Shell>
      <GlobalStyle />
      <Gradients />
      <TitleBar>
        <MenuGroup>
          <LogoSlot><ElementsLogo width={56} height={56} /></LogoSlot>
          {menus.map((m) => <MenuItem key={m}>{m}</MenuItem>)}
        </MenuGroup>
        <WindowControls>
          <WindowButton aria-label="Minimieren"><svg width="20" height="24"><path d="M0 14h20v6H0z" fill="#e4e4e4" /></svg></WindowButton>
          <WindowButton aria-label="Verkleinern">
            <svg width="24" height="20" fill="none" stroke="#e4e4e4" strokeWidth="4"><path d="M10 6V2h12v12h-6M2 8h12v10H2z" /></svg>
          </WindowButton>
          <WindowButton $wide aria-label="Schließen"><svg width="20" height="16" fill="none" stroke="#e4e4e4" strokeWidth="4"><path d="M1 0l18 16M19 0L1 16" /></svg></WindowButton>
        </WindowControls>
      </TitleBar>

      <ModeBar>
        <ModeSide><DropButton $gap={46}>Öffnen<Triangle /></DropButton></ModeSide>
        <Tabs>
          <Tab>Schnell</Tab>
          <Tab>Assistent</Tab>
          <Tab $active>Experte</Tab>
        </Tabs>
        <ModeSide $end>
          <DropButton $gap={20}>Erstellen<Triangle /></DropButton>
          <DropButton $gap={32}>Teilen<Triangle /></DropButton>
        </ModeSide>
      </ModeBar>

      <WorkArea>
        <Toolbox>
          {toolGroups.map((group) => (
            <section key={group.title}>
              <ToolHeading>{group.title}</ToolHeading>
              <ToolGrid>
                {group.tools.map(([id, name]) => (
                  <ToolButton key={id} $selected={id === "marquee"} aria-label={name}><Icon>{toolIcons[id]}</Icon></ToolButton>
                ))}
              </ToolGrid>
            </section>
          ))}
          <ToolHeading>FARBE</ToolHeading>
          <Swatches>
            <svg width="96" height="96" viewBox="0 0 96 96" fill="none" aria-hidden="true">
              <path d="M31 31h62v62H31z" fill="#fff" stroke="#000" strokeWidth="2" />
              <path d="M1 1h62v62H1z" fill="#000" stroke="#fff" strokeWidth="2" />
              <path d="M11 79h14v14H11z" fill="#fff" stroke="#000" strokeWidth="2" />
              <path d="M0 68h16v16H0z" fill="#000" />
              <path d="M74 9h6q7 0 7 8" stroke="#555" strokeWidth="3" />
              <path d="M68 9l8-7v14zM80 17h14l-7 8z" fill="#333" />
            </svg>
          </Swatches>
        </Toolbox>

        <Documents>
          <Canvas />
          <BinBar>
            <SelectWrap>
              <BinSelect aria-label="Fotobereich" defaultValue="open">
                <option value="open">Geöffnete Dateien anzeigen</option>
              </BinSelect>
              <SelectArrow width="16" height="8" viewBox="0 0 16 8"><path d="M0 0h16L8 8z" fill="#444" /></SelectArrow>
            </SelectWrap>
            <BinActions>
              <IconButton aria-label="Bereichsmenü">
                <svg width="30" height="22" fill="none">
                  <path d="M1 7h9l-4.500 5z" fill="#6ea6de" stroke="#3a6da3" />
                  <path d="M14 2h16M14 8h16M14 14h16M14 20h16" stroke="#34506c" strokeWidth="2" />
                </svg>
              </IconButton>
              <IconButton aria-label="Einklappen">
                <svg width="19" height="12" fill="none"><path d="M2 2l7.500 7.500L17 2" stroke="#333" strokeWidth="4" strokeLinecap="round" /></svg>
              </IconButton>
            </BinActions>
          </BinBar>
          <Bin>
            <BinScroll>
              <Triangle up width={14} color="#505050" />
              <Triangle width={14} color="#505050" />
            </BinScroll>
          </Bin>
        </Documents>
      </WorkArea>

      <ActionBar>
        <ActionGroup>
          <ActionItem icon="bin" label="Fotobereich" on />
          <DottedRule />
          <ActionItem icon="options" label="WZ-Optionen" />
          <DottedRule />
          {editActions.map(([icon, label]) => <ActionItem key={icon} icon={icon} label={label} />)}
        </ActionGroup>
        <ActionGroup>
          {panelActions.map(([icon, label]) => <ActionItem key={icon} icon={icon} label={label} />)}
        </ActionGroup>
      </ActionBar>

      <Taskbar>
        <TaskGroup>
          <StartButton aria-label="Start">
            <svg width="32" height="32"><path d="M0 5l13-2v12H0zM14 3l18-3v15H14zM0 16h13v13L0 27zM14 16h18v16l-18-3z" fill="#fff" /></svg>
          </StartButton>
          <SearchBox>
            <svg width="32" height="32" fill="none"><circle cx="20.500" cy="11" r="10" stroke="#111" strokeWidth="2.200" /><path d="M13.500 18.500L1 31" stroke="#111" strokeWidth="2.500" /></svg>
            <SearchInput placeholder="Zur Suche Text hier eingeben" aria-label="Suche" />
          </SearchBox>
          {pinned.map((id) => <TaskButton key={id} aria-label={id}><Icon>{taskIcons[id]}</Icon></TaskButton>)}
          <TaskButton aria-label="Elements"><ElementsLogo width={46} height={44} /></TaskButton>
          <TaskButton $active aria-label="Elements Editor"><ElementsLogo width={46} height={44} /></TaskButton>
        </TaskGroup>
        <Tray>
          {Object.keys(trayIcons).map((id) => <TrayButton key={id} aria-label={id}><Icon size={36}>{trayIcons[id]}</Icon></TrayButton>)}
          <Language>DEU</Language>
          <Clock>{"22:20\n06.09.2020"}</Clock>
          <Notifications aria-label="Benachrichtigungen">
            <svg width="34" height="34" fill="none"><path d="M1 2h31v24h-9l-6.500 6-6-6H1z" stroke="#fff" strokeWidth="2.200" /></svg>
          </Notifications>
          <ShowDesktop aria-label="Desktop anzeigen" />
        </Tray>
      </Taskbar>
    </Shell>
  );
}
